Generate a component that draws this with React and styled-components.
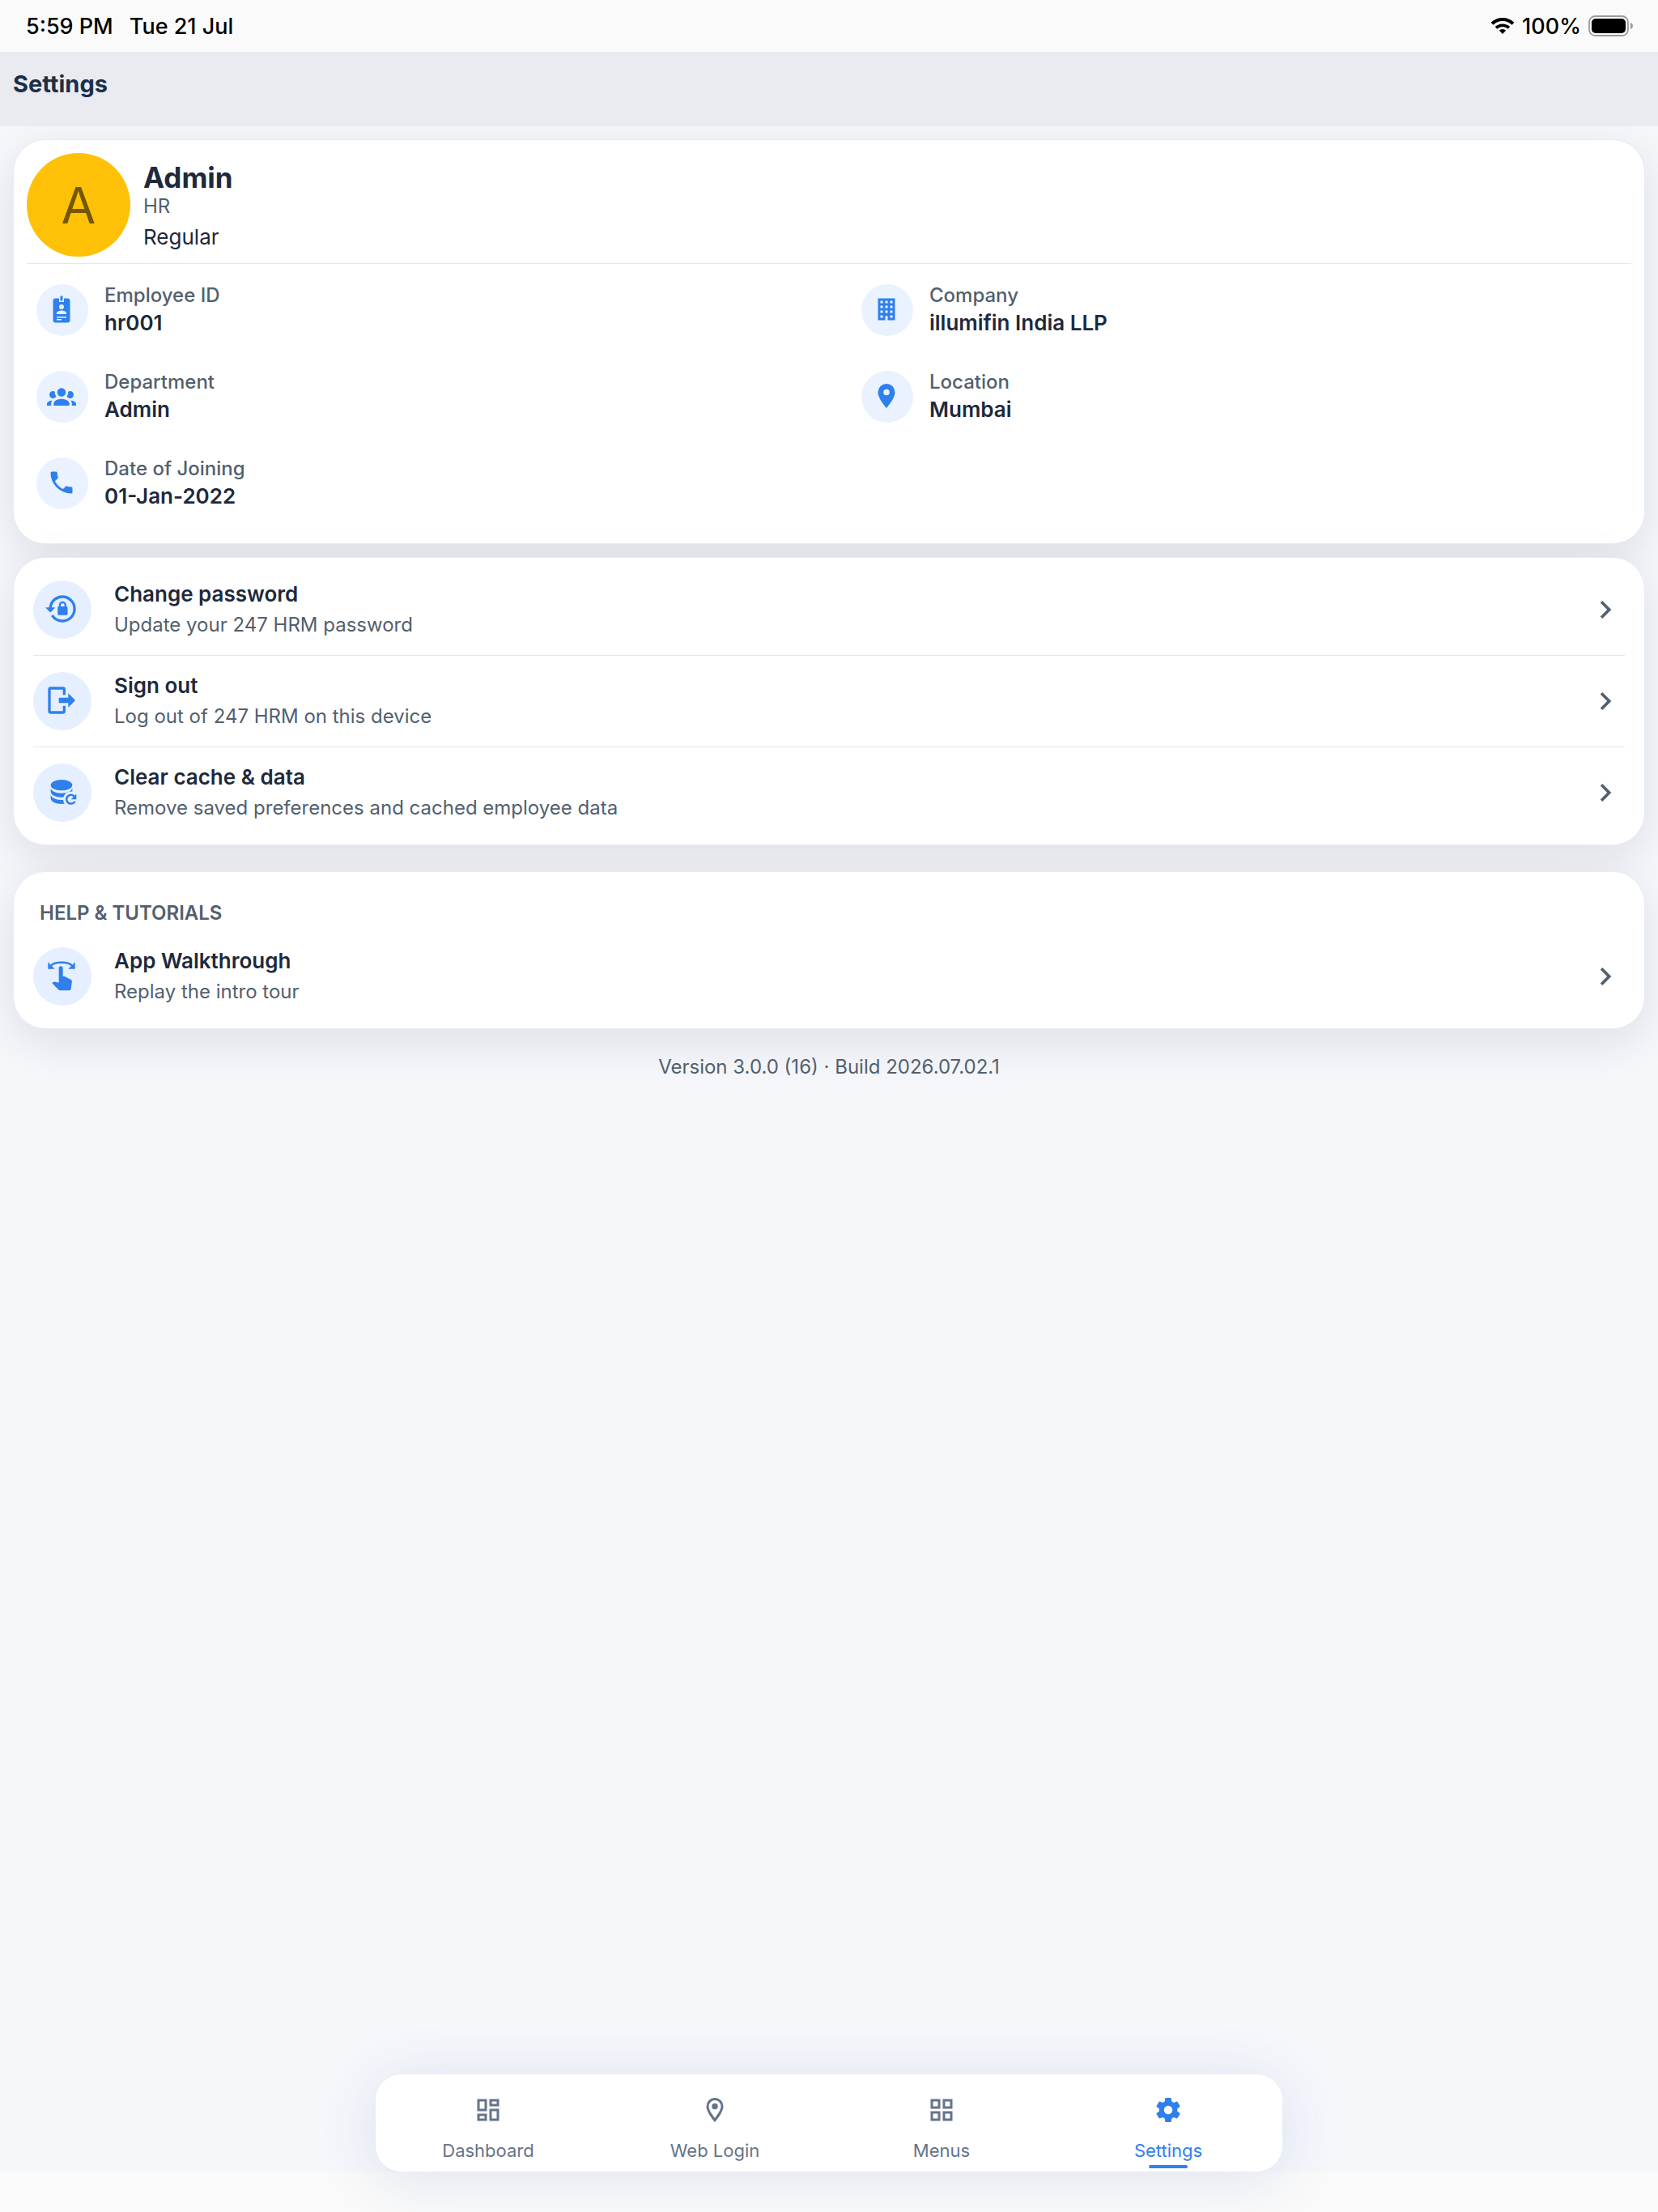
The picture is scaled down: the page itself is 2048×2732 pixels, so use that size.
import React from 'react';
import styled, { createGlobalStyle } from 'styled-components';

const ICONS = {
  badge:
    'M17,3H14V6H10V3H7A2,2 0 0,0 5,5V21A2,2 0 0,0 7,23H17A2,2 0 0,0 19,21V5A2,2 0 0,0 17,3M12,8A2,2 0 0,1 14,10A2,2 0 0,1 12,12A2,2 0 0,1 10,10A2,2 0 0,1 12,8M16,16H8V15C8,13.67 10.67,13 12,13C13.33,13 16,13.67 16,15V16M13,5H11V1H13V5M16,19H8V18H16V19M12,21H8V20H12V21Z',
  building:
    'M5,3V21H11V17.5H13V21H19V3H5M7,5H9V7H7V5M11,5H13V7H11V5M15,5H17V7H15V5M7,9H9V11H7V9M11,9H13V11H11V9M15,9H17V11H15V9M7,13H9V15H7V13M11,13H13V15H11V13M15,13H17V15H15V13M7,17H9V19H7V17M15,17H17V19H15V17Z',
  group:
    'M12,5.5A3.5,3.5 0 0,1 15.5,9A3.5,3.5 0 0,1 12,12.5A3.5,3.5 0 0,1 8.5,9A3.5,3.5 0 0,1 12,5.5M5,8C5.56,8 6.08,8.15 6.53,8.42C6.38,9.85 6.8,11.27 7.66,12.38C7.16,13.34 6.16,14 5,14A3,3 0 0,1 2,11A3,3 0 0,1 5,8M19,8A3,3 0 0,1 22,11A3,3 0 0,1 19,14C17.84,14 16.84,13.34 16.34,12.38C17.2,11.27 17.62,9.85 17.47,8.42C17.92,8.15 18.44,8 19,8M5.5,18.25C5.5,16.18 8.41,14.5 12,14.5C15.59,14.5 18.5,16.18 18.5,18.25V20H5.5V18.25M0,20V18.5C0,17.11 1.89,15.94 4.45,15.6C3.86,16.28 3.5,17.22 3.5,18.25V20H0M24,20H20.5V18.25C20.5,17.22 20.14,16.28 19.55,15.6C22.11,15.94 24,17.11 24,18.5V20Z',
  marker:
    'M12,11.5A2.5,2.5 0 0,1 9.5,9A2.5,2.5 0 0,1 12,6.5A2.5,2.5 0 0,1 14.5,9A2.5,2.5 0 0,1 12,11.5M12,2A7,7 0 0,0 5,9C5,14.25 12,22 12,22C12,22 19,14.25 19,9A7,7 0 0,0 12,2Z',
  phone:
    'M6.62,10.79C8.06,13.62 10.38,15.94 13.21,17.38L15.41,15.18C15.69,14.9 16.08,14.82 16.43,14.93C17.55,15.3 18.75,15.5 20,15.5A1,1 0 0,1 21,16.5V20A1,1 0 0,1 20,21A17,17 0 0,1 3,4A1,1 0 0,1 4,3H7.5A1,1 0 0,1 8.5,4C8.5,5.25 8.7,6.45 9.07,7.57C9.18,7.92 9.1,8.31 8.82,8.59L6.62,10.79Z',
  lockReset:
    'M12.63,2C18.16,2 22.64,6.5 22.64,12C22.64,17.5 18.16,22 12.63,22C9.12,22 6.05,20.18 4.26,17.43L5.84,16.18C7.25,18.47 9.76,20 12.64,20A8,8 0 0,0 20.64,12A8,8 0 0,0 12.64,4C8.56,4 5.2,7.06 4.71,11H7.47L3.73,14.73L0,11H2.69C3.19,5.95 7.45,2 12.63,2M15.59,10.24C16.09,10.25 16.5,10.65 16.5,11.16V15.77C16.5,16.27 16.09,16.69 15.58,16.69H10.05C9.54,16.69 9.13,16.27 9.13,15.77V11.16C9.13,10.65 9.54,10.25 10.04,10.24V9.23C10.04,7.7 11.29,6.46 12.81,6.46C14.34,6.46 15.59,7.7 15.59,9.23V10.24M12.81,7.86C12.06,7.86 11.44,8.47 11.44,9.23V10.24H14.19V9.23C14.19,8.47 13.57,7.86 12.81,7.86Z',
  signOut:
    'M17,17.25V14H10V10H17V6.75L22.25,12L17,17.25M13,2A2,2 0 0,1 15,4V8H13V4H4V20H13V16H15V20A2,2 0 0,1 13,22H4A2,2 0 0,1 2,20V4A2,2 0 0,1 4,2H13Z',
  swipe:
    'M20.11,3.89L22,2V7H17L19.08,4.92C18.55,4.23 16.64,3 12,3C7.36,3 5.45,4.23 4.92,4.92L7,7H2V2L3.89,3.89C4.62,3.01 6.79,1.5 12,1.5C17.21,1.5 19.38,3.01 20.11,3.89M19.73,16.27V16.45L19,21.7C18.92,22.45 18.39,23 17.67,23H10.88C10.47,23 10.1,22.82 9.83,22.55L5,17.62L5.8,16.84C6,16.62 6.29,16.5 6.63,16.5H6.8L10,17.24V6.5A1.5,1.5 0 0,1 11.5,5A1.5,1.5 0 0,1 13,6.5V12.5H13.78L14.35,12.63L18.8,14.85C19.37,15.14 19.73,15.65 19.73,16.27Z',
  chevron: 'M8.59,16.58L13.17,12L8.59,7.41L10,6L16,12L10,18L8.59,16.58Z',
  dashboard:
    'M19,5V7H15V5H19M9,5V11H5V5H9M19,13V19H15V13H19M9,17V19H5V17H9M21,3H13V9H21V3M11,3H3V13H11V3M21,11H13V21H21V11M11,15H3V21H11V15Z',
  markerOutline:
    'M12,6.5A2.5,2.5 0 0,1 14.5,9A2.5,2.5 0 0,1 12,11.5A2.5,2.5 0 0,1 9.5,9A2.5,2.5 0 0,1 12,6.5M12,2A7,7 0 0,1 19,9C19,14.25 12,22 12,22C12,22 5,14.25 5,9A7,7 0 0,1 12,2M12,4A5,5 0 0,0 7,9C7,10 7,12 12,18.71C17,12 17,10 17,9A5,5 0 0,0 12,4Z',
  grid: 'M3 11H11V3H3M5 5H9V9H5M13 21H21V13H13M15 15H19V19H15M3 21H11V13H3M5 15H9V19H5M13 3V11H21V3M19 9H15V5H19Z',
  cog: 'M12,15.5A3.5,3.5 0 0,1 8.5,12A3.5,3.5 0 0,1 12,8.5A3.5,3.5 0 0,1 15.5,12A3.5,3.5 0 0,1 12,15.5M19.43,12.97C19.47,12.65 19.5,12.33 19.5,12C19.5,11.67 19.47,11.34 19.43,11L21.54,9.37C21.73,9.22 21.78,8.95 21.66,8.73L19.66,5.27C19.54,5.05 19.27,4.96 19.05,5.05L16.56,6.05C16.04,5.66 15.5,5.32 14.87,5.07L14.5,2.42C14.46,2.18 14.25,2 14,2H10C9.75,2 9.54,2.18 9.5,2.42L9.13,5.07C8.5,5.32 7.96,5.66 7.44,6.05L4.95,5.05C4.73,4.96 4.46,5.05 4.34,5.27L2.34,8.73C2.21,8.95 2.27,9.22 2.46,9.37L4.57,11C4.53,11.34 4.5,11.67 4.5,12C4.5,12.33 4.53,12.65 4.57,12.97L2.46,14.63C2.27,14.78 2.21,15.05 2.34,15.27L4.34,18.73C4.46,18.95 4.73,19.03 4.95,18.95L7.44,17.94C7.96,18.34 8.5,18.68 9.13,18.93L9.5,21.58C9.54,21.82 9.75,22 10,22H14C14.25,22 14.46,21.82 14.5,21.58L14.87,18.93C15.5,18.67 16.04,18.34 16.56,17.94L19.05,18.95C19.27,19.03 19.54,18.95 19.66,18.73L21.66,15.27C21.78,15.05 21.73,14.78 21.54,14.63L19.43,12.97Z',
};

const Icon = ({ name, size = 36 }) => (
  <svg width={size} height={size} viewBox="0 0 24 24" fill="currentColor" fillRule="evenodd" aria-hidden="true">
    <path d={ICONS[name]} />
  </svg>
);

const DatabaseRefreshIcon = () => (
  <svg width="40" height="40" viewBox="0 0 24 24" fill="currentColor" aria-hidden="true">
    <mask id="refreshGap">
      <rect width="24" height="24" fill="#fff" />
      <circle cx="19" cy="17.5" r="5.8" fill="#000" />
    </mask>
    <ellipse cx="12" cy="7" rx="8" ry="4" />
    <path
      mask="url(#refreshGap)"
      d="M4,9V12C4,14.21 7.58,16 12,16S20,14.21 20,12V9C20,11.21 16.42,13 12,13S4,11.21 4,9M4,14V17C4,19.21 7.58,21 12,21S20,19.21 20,17V14C20,16.21 16.42,18 12,18S4,16.21 4,14Z"
    />
    <path d="M19,13.5C20.11,13.5 21.11,13.95 21.83,14.67L23,13.5V17.5H19L20.77,15.73C20.32,15.28 19.69,15 19,15C17.62,15 16.5,16.12 16.5,17.5C16.5,18.88 17.62,20 19,20C19.82,20 20.55,19.61 21,19H22.71C22.12,20.47 20.68,21.5 19,21.5C16.79,21.5 15,19.71 15,17.5C15,15.29 16.79,13.5 19,13.5Z" />
  </svg>
);

const WifiIcon = () => (
  <svg width="30" height="22" viewBox="0 0 30 22" fill="none" stroke="#000" aria-hidden="true">
    <path d="M2 8.2a18.6 18.6 0 0 1 26 0" strokeWidth="4" />
    <path d="M7 13.4a11.6 11.6 0 0 1 16 0" strokeWidth="3.6" />
    <path d="M15 21l-4.2-4.4a6.4 6.4 0 0 1 8.4 0z" fill="#000" stroke="none" />
  </svg>
);

const BatteryIcon = () => (
  <svg width="56" height="26" viewBox="0 0 56 26" aria-hidden="true">
    <rect x="1" y="1" width="48" height="24" rx="7.5" fill="none" stroke="#9b9b9b" strokeWidth="1.8" />
    <rect x="4" y="4" width="42" height="18" rx="5" fill="#000" />
    <path d="M52 9c2 .8 3 2.2 3 4s-1 3.2-3 4z" fill="#9b9b9b" />
  </svg>
);

const details = [
  { icon: 'badge', label: 'Employee ID', value: 'hr001' },
  { icon: 'building', label: 'Company', value: 'illumifin India LLP' },
  { icon: 'group', label: 'Department', value: 'Admin' },
  { icon: 'marker', label: 'Location', value: 'Mumbai' },
  { icon: 'phone', label: 'Date of Joining', value: '01-Jan-2022' },
];

const actions = [
  {
    icon: <Icon name="lockReset" size={40} />,
    title: 'Change password',
    text: 'Update your 247 HRM password',
  },
  {
    icon: <Icon name="signOut" size={40} />,
    title: 'Sign out',
    text: 'Log out of 247 HRM on this device',
  },
  {
    icon: <DatabaseRefreshIcon />,
    title: 'Clear cache & data',
    text: 'Remove saved preferences and cached employee data',
  },
];

const tabs = [
  { icon: 'dashboard', label: 'Dashboard' },
  { icon: 'markerOutline', label: 'Web Login' },
  { icon: 'grid', label: 'Menus' },
  { icon: 'cog', label: 'Settings', active: true },
];

const ActionItem = ({ icon, title, text }) => (
  <ActionRow type="button">
    <IconCircle $large>{icon}</IconCircle>
    <ActionText>
      <ActionTitle>{title}</ActionTitle>
      <ActionHint>{text}</ActionHint>
    </ActionText>
    <Icon name="chevron" size={44} />
  </ActionRow>
);

const App = () => {
  return (
    <Page>
      <GlobalStyle />
      <StatusBar>
        <StatusGroup $gap={20}>
          <span>5:59 PM</span>
          <span>Tue 21 Jul</span>
        </StatusGroup>
        <StatusGroup $gap={9}>
          <WifiIcon />
          <span>100%</span>
          <BatteryIcon />
        </StatusGroup>
      </StatusBar>
      <Header>
        <h1>Settings</h1>
      </Header>
      <Main>
        <ProfileCard>
          <ProfileTop>
            <Avatar>A</Avatar>
            <ProfileText>
              <Name>Admin</Name>
              <Role>HR</Role>
              <Shift>Regular</Shift>
            </ProfileText>
          </ProfileTop>
          <DetailGrid>
            {details.map((item) => (
              <Detail key={item.label}>
                <IconCircle>
                  <Icon name={item.icon} />
                </IconCircle>
                <dl>
                  <dt>{item.label}</dt>
                  <dd>{item.value}</dd>
                </dl>
              </Detail>
            ))}
          </DetailGrid>
        </ProfileCard>
        <ListCard>
          {actions.map((item) => (
            <ActionItem key={item.title} {...item} />
          ))}
        </ListCard>
        <ListCard $spaced>
          <SectionTitle>HELP &amp; TUTORIALS</SectionTitle>
          <ActionItem
            icon={<Icon name="swipe" size={40} />}
            title="App Walkthrough"
            text="Replay the intro tour"
          />
        </ListCard>
        <Version>Version 3.0.0 (16) · Build 2026.07.02.1</Version>
      </Main>
      <TabBar>
        {tabs.map((tab) => (
          <Tab key={tab.label} href="#" $active={tab.active}>
            <Icon name={tab.icon} />
            <span>{tab.label}</span>
          </Tab>
        ))}
      </TabBar>
      <BottomInset />
    </Page>
  );
};

export default App;

const GlobalStyle = createGlobalStyle`
  * {
    box-sizing: border-box;
  }
  body {
    margin: 0;
    background: #f5f7fb;
    color: #1e293b;
    font-family: Inter, 'Liberation Sans', sans-serif;
  }
  h1, h2, h3, p, dl, dd {
    margin: 0;
  }
`;

const Page = styled.div`
  min-height: 100vh;
  display: flex;
  flex-direction: column;
`;

const StatusBar = styled.div`
  position: relative;
  z-index: 1;
  height: 64px;
  padding: 0 30px 0 32px;
  display: flex;
  align-items: center;
  justify-content: space-between;
  background: #fafafa;
  color: #000;
  font-size: 27px;
  font-weight: 500;
`;

const StatusGroup = styled.div`
  display: flex;
  align-items: center;
  gap: ${({ $gap }) => $gap}px;
`;

const Header = styled.header`
  position: relative;
  z-index: 1;
  padding: 22px 16px 34px;
  background: #e9ebf0;
  h1 {
    color: #1d2f47;
    font-size: 29px;
    line-height: 36px;
    font-weight: 700;
  }
`;

const Main = styled.main`
  flex: 1;
  padding: 16px;
`;

const Card = styled.section`
  background: #fff;
  border: 1px solid #e6ecf7;
  border-radius: 40px;
  box-shadow: 0 16px 56px rgba(20, 22, 45, 0.1);
`;

const ProfileCard = styled(Card)`
  padding: 16px 16px 40px;
`;

const ProfileTop = styled.div`
  display: flex;
  align-items: center;
  gap: 16px;
  padding-bottom: 8px;
  border-bottom: 1px solid #e5e7eb;
`;

const Avatar = styled.div`
  width: 128px;
  height: 128px;
  border-radius: 50%;
  display: flex;
  align-items: center;
  justify-content: center;
  background: #ffc107;
  color: #735703;
  font-size: 62px;
`;

const ProfileText = styled.div`
  padding-top: 8px;
`;

const Name = styled.h2`
  font-size: 35px;
  line-height: 40px;
  font-weight: 700;
`;

const Role = styled.p`
  color: #52606d;
  font-size: 24px;
  line-height: 32px;
`;

const Shift = styled.p`
  font-size: 26px;
  line-height: 44px;
`;

const DetailGrid = styled.div`
  padding-top: 23px;
  display: grid;
  grid-template-columns: 1fr 1fr;
  gap: 39px 56px;
`;

const Detail = styled.div`
  display: flex;
  align-items: center;
  gap: 20px;
  padding-left: 12px;
  dt {
    color: #52606d;
    font-size: 24px;
    line-height: 32px;
    font-weight: 500;
  }
  dd {
    font-size: 26px;
    line-height: 36px;
    font-weight: 600;
  }
`;

const IconCircle = styled.span`
  width: ${({ $large }) => ($large ? 72 : 64)}px;
  height: ${({ $large }) => ($large ? 72 : 64)}px;
  padding: 0 2px 2px 0;
  flex-shrink: 0;
  display: flex;
  align-items: center;
  justify-content: center;
  border-radius: 50%;
  background: ${({ $large }) => ($large ? '#e5efff' : '#eaf2ff')};
  color: #2f80ed;
`;

const ListCard = styled(Card)`
  margin-top: ${({ $spaced }) => ($spaced ? 32 : 16)}px;
  padding: 8px 24px;
`;

const ActionRow = styled.button`
  width: 100%;
  height: 112px;
  padding: 0 2px 0 0;
  display: flex;
  align-items: center;
  gap: 28px;
  border: 0;
  background: none;
  color: #52606d;
  font: inherit;
  text-align: left;
  cursor: pointer;
  & + & {
    height: 113px;
    border-top: 1px solid #e5e7eb;
  }
`;

const ActionText = styled.span`
  flex: 1;
  display: flex;
  flex-direction: column;
  line-height: 38px;
`;

const ActionTitle = styled.span`
  color: #1e293b;
  font-size: 26px;
  font-weight: 600;
`;

const ActionHint = styled.span`
  font-size: 24px;
`;

const SectionTitle = styled.h3`
  padding: 25px 8px 4px;
  color: #52606d;
  font-size: 24px;
  line-height: 36px;
  font-weight: 600;
`;

const Version = styled.p`
  margin-top: 29px;
  color: #52606d;
  font-size: 24px;
  line-height: 36px;
  text-align: center;
`;

const TabBar = styled.nav`
  position: relative;
  z-index: 1;
  width: 100%;
  max-width: 1120px;
  height: 120px;
  margin: 0 auto;
  display: flex;
  border-radius: 32px;
  background: #fff;
  box-shadow: 0 8px 72px rgba(40, 70, 150, 0.13);
`;

const Tab = styled.a`
  flex: 1;
  padding: 26px 2px 0 0;
  display: flex;
  flex-direction: column;
  align-items: center;
  gap: 16px;
  color: ${({ $active }) => ($active ? '#2f80ed' : '#64748b')};
  font-size: 22px;
  line-height: 32px;
  text-decoration: none;
  &::after {
    content: '';
    width: 48px;
    height: 4px;
    margin-top: -14px;
    border-radius: 2px;
    background: ${({ $active }) => ($active ? '#2f80ed' : 'transparent')};
  }
`;

const BottomInset = styled.div`
  height: 50px;
  background: #fafafa;
`;
